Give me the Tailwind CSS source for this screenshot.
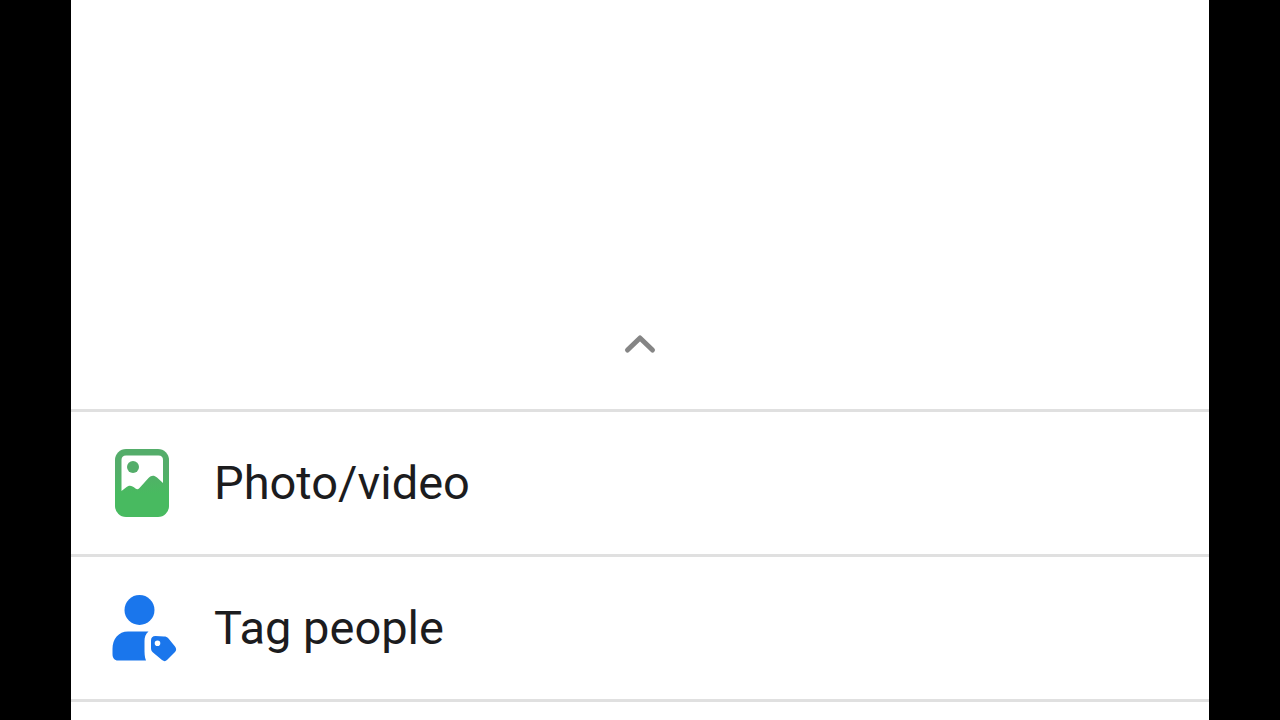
<!DOCTYPE html>
<html lang="en">
<head>
    <meta charset="UTF-8">
    <meta name="viewport" content="width=device-width, initial-scale=1.0">
    <title>Create post</title>
    <script src="https://cdn.jsdelivr.net/npm/@tailwindcss/browser@4"></script>
</head>
<body class="bg-black px-[71px] font-[Roboto,sans-serif] text-[#1c1c1e]">

    <main class="flex h-screen flex-col overflow-hidden bg-white">

        <!-- Empty composer -->
        <div class="grow"></div>

        <!-- Handle that pulls the sheet up -->
        <button type="button" aria-label="Show more options" class="flex h-32 w-full shrink-0 items-center justify-center">
            <svg class="h-8 w-10" viewBox="0 0 40 32" fill="none" stroke="#858585" stroke-width="5" stroke-linecap="round" stroke-linejoin="round">
                <path d="M7.5 21L20 9L32.500 21"></path>
            </svg>
        </button>

        <!-- Post options -->
        <ul class="shrink-0 border-b-3 border-[#e0e0e0] mb-[18px]">
            <li class="border-t-3 border-[#e0e0e0]">
                <button type="button" class="flex h-[142px] w-full items-center gap-9 px-[39px] text-left text-[47px]">
                    <svg class="h-[72px] w-[68px] shrink-0" viewBox="0 0 68 72">
                        <defs>
                            <linearGradient id="photo-green" x1="0" y1="0" x2="0" y2="1">
                                <stop offset="0.3" stop-color="#54ad6a"></stop>
                                <stop offset="0.65" stop-color="#48ba60"></stop>
                            </linearGradient>
                        </defs>
                        <rect x="5" y="2" width="54" height="68" rx="11" fill="url(#photo-green)"></rect>
                        <path d="M11.500 13C11.500 10 13 8.500 16 8.500H48.500C51.500 8.500 53 10 53 13V36L47 30.500C44 28 41.500 28 38.500 31L29.500 41C28 42.500 27 42.500 25.500 41.500C21.500 38 19 38 16 40.500L11.500 44Z" fill="#fff"></path>
                        <circle cx="23" cy="20" r="6" fill="#54ad6a"></circle>
                    </svg>
                    <span>Photo/video</span>
                </button>
            </li>
            <li class="border-t-3 border-[#e0e0e0]">
                <button type="button" class="flex h-[142px] w-full items-center gap-9 px-[39px] text-left text-[47px]">
                    <svg class="h-[72px] w-[68px] shrink-0" viewBox="0 0 68 72" fill="#1a76ec">
                        <circle cx="29.500" cy="18" r="15"></circle>
                        <path d="M18 39.500H38.500C35.500 42 34.500 45 34.500 49V56C34.500 61 34.500 65 36 68.500H8C4.500 68.500 2.500 66 2.500 62V57C2.500 47 8.500 39.500 18 39.500Z"></path>
                        <path fill-rule="evenodd" d="M45.500 44L54 44.500C56 44.500 57 45 58.500 46.500L65 54.500C66.500 56.500 66.500 58.500 65 60L57 68C55.500 69.500 54 69.500 52 68L43 60.500C41.500 59 41 58 41 56V48.500C41 45.500 42.500 44 45.500 44ZM47.500 48.500A2.800 2.800 0 1 0 47.500 54.100A2.800 2.800 0 1 0 47.500 48.500Z"></path>
                    </svg>
                    <span>Tag people</span>
                </button>
            </li>
        </ul>
    </main>

</body>
</html>
